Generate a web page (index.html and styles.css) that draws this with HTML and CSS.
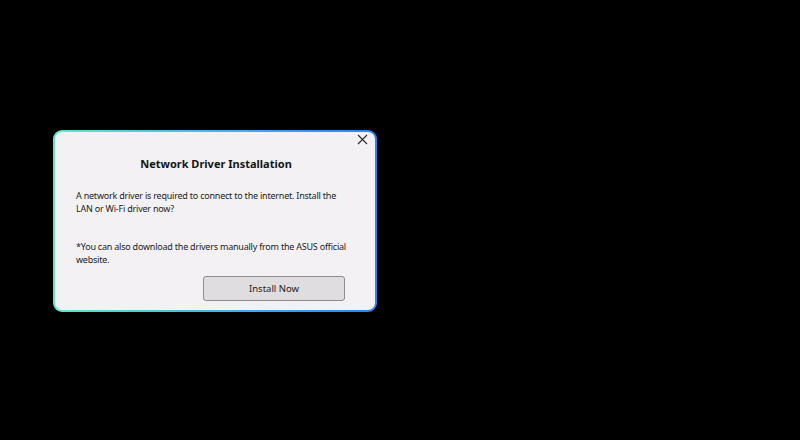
FILE: index.html
```html
<!DOCTYPE html>
<html lang="en">
<head>
    <meta charset="UTF-8">
    <meta name="viewport" content="width=device-width, initial-scale=1.0">
    <title>Network Driver Installation</title>
    <link rel="stylesheet" href="styles.css">
</head>
<body>
    <div class="dialog">
        <button class="close-button" aria-label="Close">
            <svg width="11" height="11" viewBox="0 0 11 11">
                <path d="M1 1 L10 10 M10 1 L1 10" stroke="#2b2b2b" stroke-width="1.1" fill="none"/>
            </svg>
        </button>
        <h1>Network Driver Installation</h1>
        <p class="message">A network driver is required to connect to the internet. Install the LAN or Wi-Fi driver now?</p>
        <p class="note">*You can also download the drivers manually from the ASUS official website.</p>
        <div class="actions">
            <button class="install-button">Install Now</button>
        </div>
    </div>
</body>
</html>
```

FILE: styles.css
```css
body {
    margin: 0;
    padding: 130px 0 0 53px;
    background-color: #000;
    font-family: "Noto Sans", "Open Sans", Arial, sans-serif;
    height: 440px;
    box-sizing: border-box;
}
.dialog {
    position: relative;
    width: 324px;
    height: 182px;
    box-sizing: border-box;
    border: 2px solid transparent;
    border-radius: 9px;
    background: linear-gradient(#f3f1f4, #f3f1f4) padding-box,
                linear-gradient(90deg, #62e6c6, #4aa6ea 60%, #2f7ff0) border-box;
    padding: 24px 28px 9px 21px;
    color: #1c1c1c;
}
.close-button {
    position: absolute;
    top: -2px;
    right: 3px;
    width: 20px;
    height: 18px;
    padding: 0;
    border: none;
    background: none;
    display: flex;
    align-items: center;
    justify-content: center;
}
h1 {
    margin: 0;
    font-size: 11px;
    line-height: 16px;
    font-weight: bold;
    text-align: center;
    padding-left: 9px;
    color: #141414;
}
.message,
.note {
    margin: 0;
    font-size: 9px;
    line-height: 13px;
    letter-spacing: -0.22px;
}
.message {
    margin-top: 16.5px;
}
.note {
    margin-top: 25px;
}
.actions {
    display: flex;
    justify-content: flex-end;
    margin-top: 10.5px;
}
.install-button {
    width: 142px;
    height: 25px;
    margin-right: 2px;
    background-color: #dfdddf;
    border: 1px solid #8e8c8e;
    border-radius: 3px;
    font-family: inherit;
    font-size: 9.5px;
    color: #1c1c1c;
}
```
